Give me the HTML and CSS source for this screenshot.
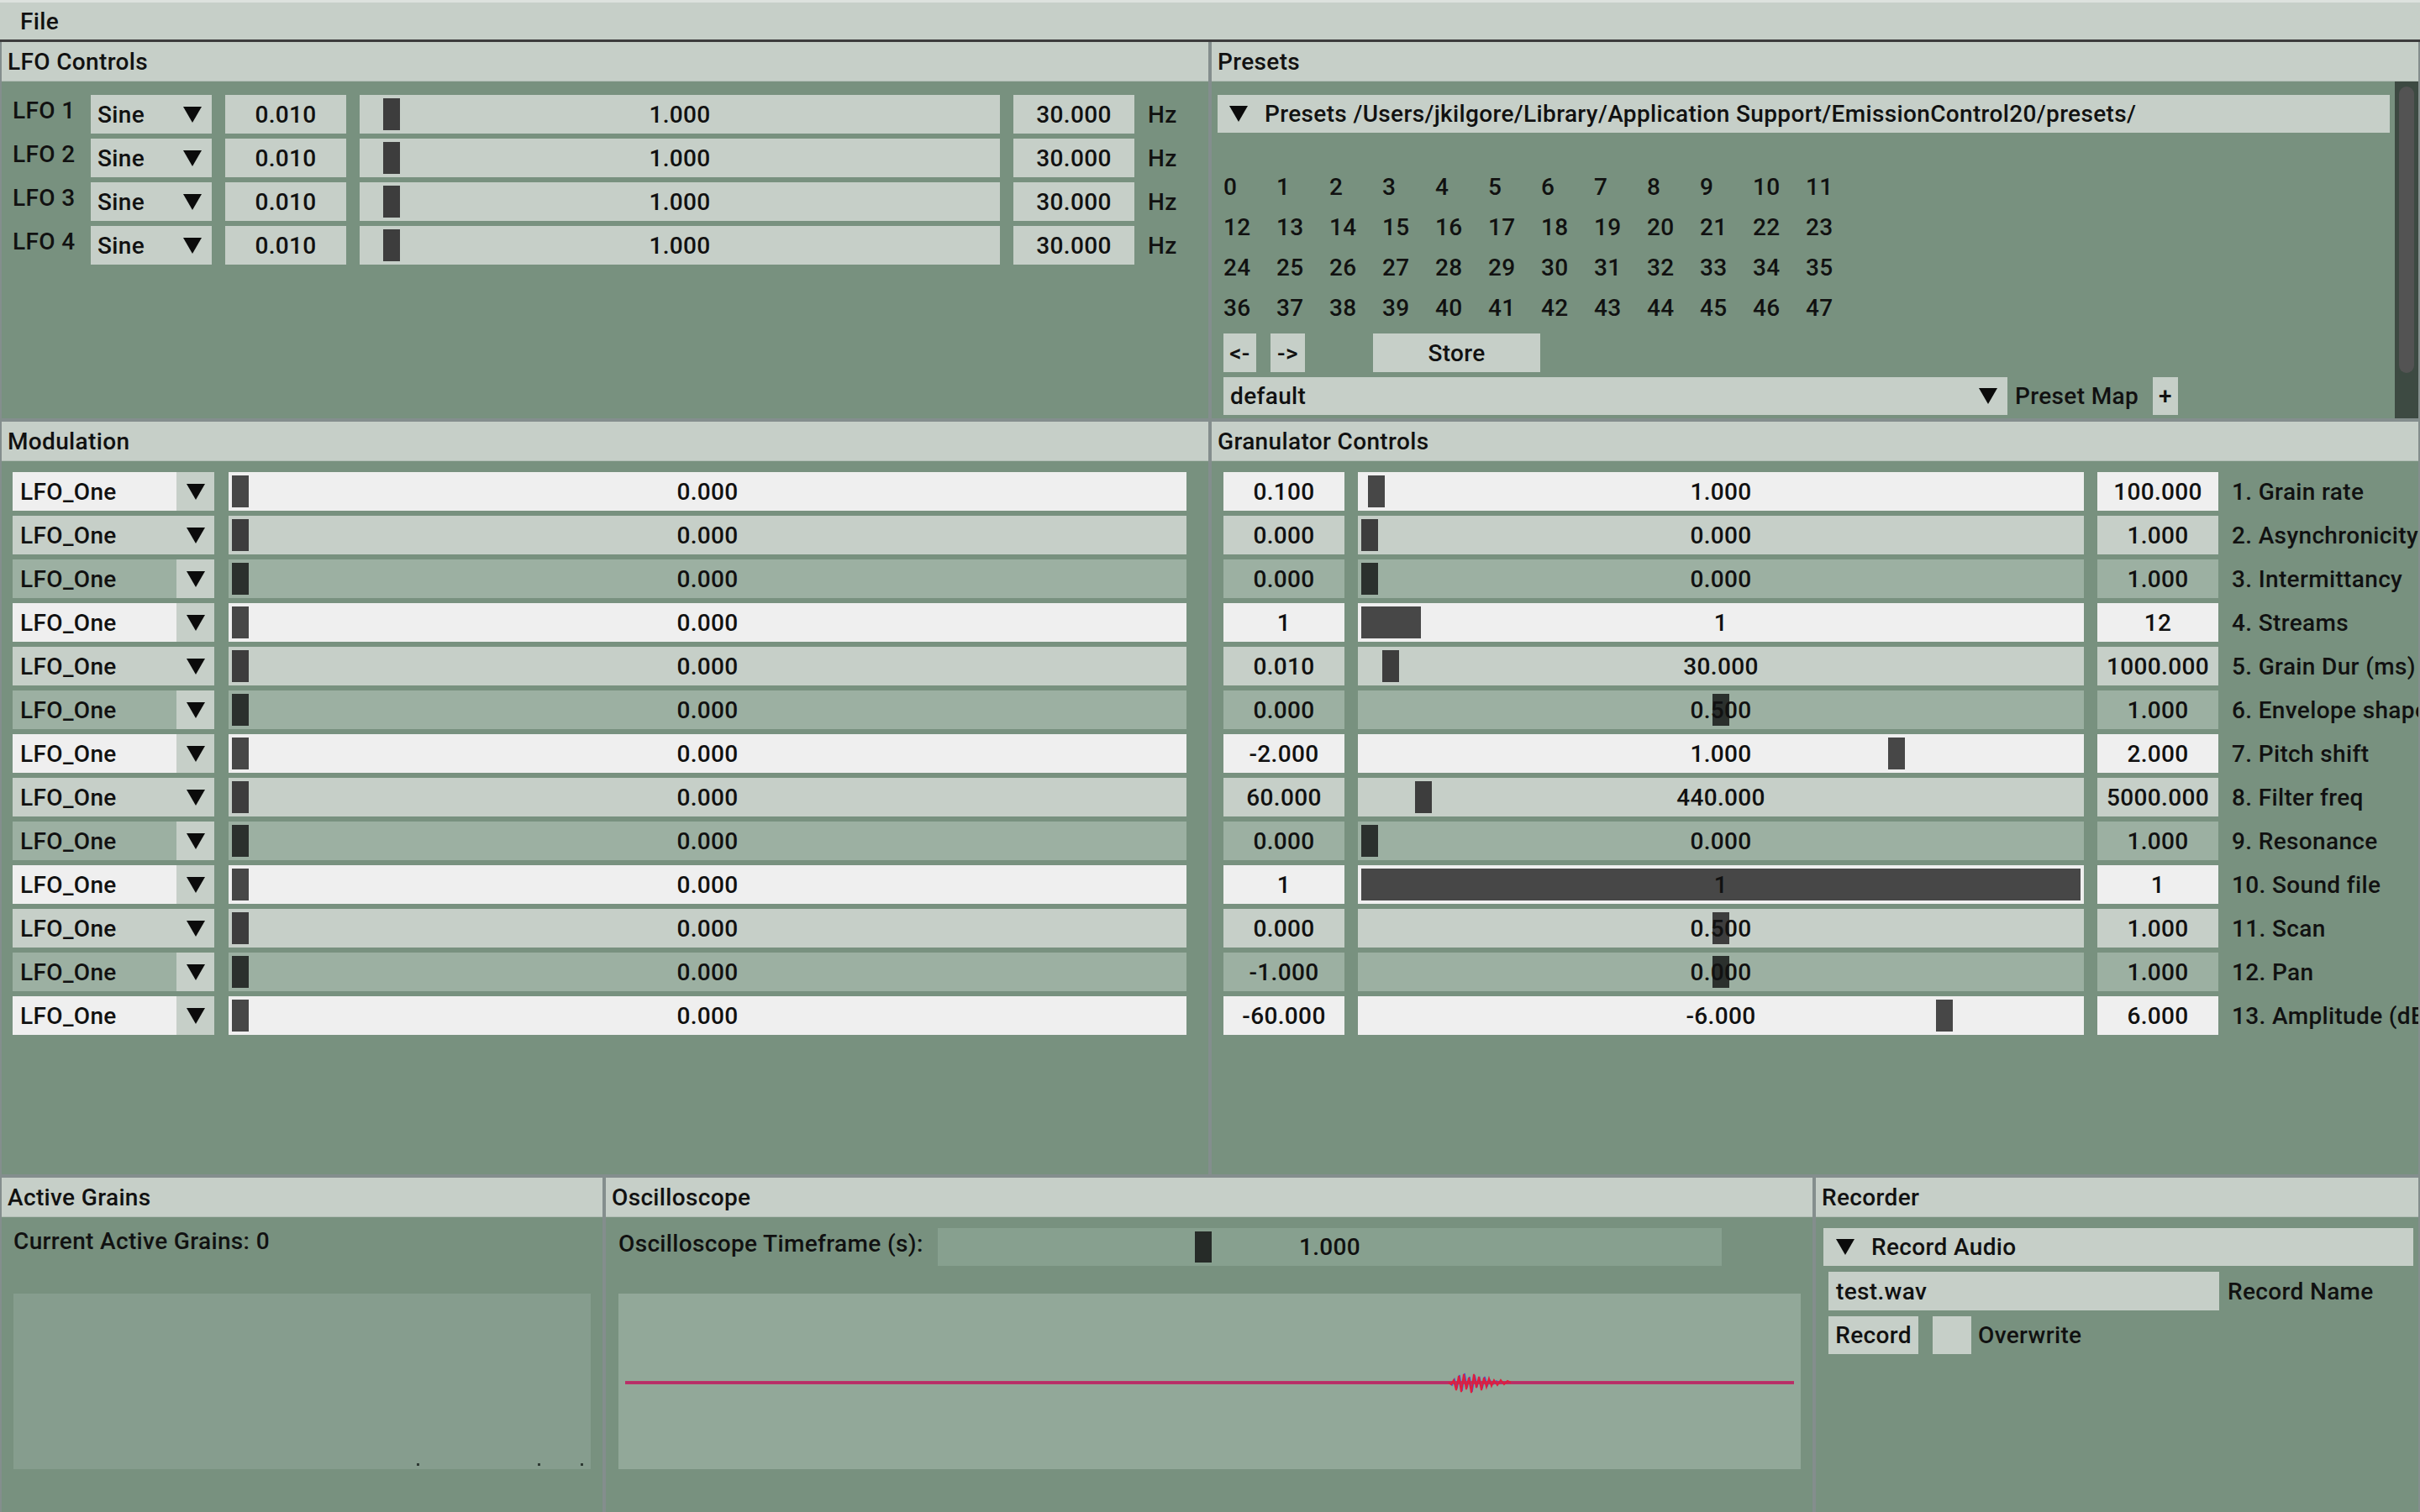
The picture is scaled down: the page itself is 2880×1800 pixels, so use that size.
FILE: index.html
```html
<!DOCTYPE html>
<html>
<head>
<meta charset="utf-8">
<title>EmissionControl2</title>
<link rel="stylesheet" href="styles.css">
</head>
<body>
<div class="menubar"><span class="menu-item">File</span></div>
<main class="layout">

  <section class="panel">
    <header class="panel-header">LFO Controls</header>
    <div class="lfo-body">
      <div class="lfo-row l">
        <span class="lfo-label">LFO 1</span>
        <div class="fld combo lfo-combo"><span class="ctext">Sine</span><i class="tri"></i></div>
        <div class="fld num">0.010</div>
        <div class="fld slider lfo-slider"><i class="grab" style="left:28px"></i><span class="sval">1.000</span></div>
        <div class="fld num">30.000</div>
        <span class="unit">Hz</span>
      </div>
      <div class="lfo-row l">
        <span class="lfo-label">LFO 2</span>
        <div class="fld combo lfo-combo"><span class="ctext">Sine</span><i class="tri"></i></div>
        <div class="fld num">0.010</div>
        <div class="fld slider lfo-slider"><i class="grab" style="left:28px"></i><span class="sval">1.000</span></div>
        <div class="fld num">30.000</div>
        <span class="unit">Hz</span>
      </div>
      <div class="lfo-row l">
        <span class="lfo-label">LFO 3</span>
        <div class="fld combo lfo-combo"><span class="ctext">Sine</span><i class="tri"></i></div>
        <div class="fld num">0.010</div>
        <div class="fld slider lfo-slider"><i class="grab" style="left:28px"></i><span class="sval">1.000</span></div>
        <div class="fld num">30.000</div>
        <span class="unit">Hz</span>
      </div>
      <div class="lfo-row l">
        <span class="lfo-label">LFO 4</span>
        <div class="fld combo lfo-combo"><span class="ctext">Sine</span><i class="tri"></i></div>
        <div class="fld num">0.010</div>
        <div class="fld slider lfo-slider"><i class="grab" style="left:28px"></i><span class="sval">1.000</span></div>
        <div class="fld num">30.000</div>
        <span class="unit">Hz</span>
      </div>
    </div>
  </section>

  <section class="panel">
    <header class="panel-header">Presets</header>
    <div class="presets-body">
      <div class="presets-content">
        <div class="collapse-bar presets-bar"><i class="tri"></i><span>Presets /Users/jkilgore/Library/Application Support/EmissionControl20/presets/</span></div>
        <div class="preset-grid">
          <span>0</span><span>1</span><span>2</span><span>3</span><span>4</span><span>5</span><span>6</span><span>7</span><span>8</span><span>9</span><span>10</span><span>11</span>
          <span>12</span><span>13</span><span>14</span><span>15</span><span>16</span><span>17</span><span>18</span><span>19</span><span>20</span><span>21</span><span>22</span><span>23</span>
          <span>24</span><span>25</span><span>26</span><span>27</span><span>28</span><span>29</span><span>30</span><span>31</span><span>32</span><span>33</span><span>34</span><span>35</span>
          <span>36</span><span>37</span><span>38</span><span>39</span><span>40</span><span>41</span><span>42</span><span>43</span><span>44</span><span>45</span><span>46</span><span>47</span>
        </div>
        <div class="preset-buttons">
          <button class="btn btn-prev">&lt;-</button>
          <button class="btn btn-next">-&gt;</button>
          <button class="btn btn-store">Store</button>
        </div>
        <div class="preset-map-row">
          <div class="fld combo map-combo"><span class="ctext">default</span><i class="tri"></i></div>
          <span class="map-label">Preset Map</span>
          <button class="btn btn-plus">+</button>
        </div>
      </div>
      <div class="scrollbar"><div class="thumb"></div></div>
    </div>
  </section>

  <section class="panel">
    <header class="panel-header">Modulation</header>
    <div class="mod-body">
      <div class="mod-row w"><div class="fld mcombo"><span class="ctext">LFO_One</span><span class="carrow"><i class="tri"></i></span></div><div class="fld slider mslider"><i class="grab" style="left:4px"></i><span class="sval">0.000</span></div></div>
      <div class="mod-row l"><div class="fld mcombo"><span class="ctext">LFO_One</span><span class="carrow"><i class="tri"></i></span></div><div class="fld slider mslider"><i class="grab" style="left:4px"></i><span class="sval">0.000</span></div></div>
      <div class="mod-row m"><div class="fld mcombo"><span class="ctext">LFO_One</span><span class="carrow"><i class="tri"></i></span></div><div class="fld slider mslider"><i class="grab" style="left:4px"></i><span class="sval">0.000</span></div></div>
      <div class="mod-row w"><div class="fld mcombo"><span class="ctext">LFO_One</span><span class="carrow"><i class="tri"></i></span></div><div class="fld slider mslider"><i class="grab" style="left:4px"></i><span class="sval">0.000</span></div></div>
      <div class="mod-row l"><div class="fld mcombo"><span class="ctext">LFO_One</span><span class="carrow"><i class="tri"></i></span></div><div class="fld slider mslider"><i class="grab" style="left:4px"></i><span class="sval">0.000</span></div></div>
      <div class="mod-row m"><div class="fld mcombo"><span class="ctext">LFO_One</span><span class="carrow"><i class="tri"></i></span></div><div class="fld slider mslider"><i class="grab" style="left:4px"></i><span class="sval">0.000</span></div></div>
      <div class="mod-row w"><div class="fld mcombo"><span class="ctext">LFO_One</span><span class="carrow"><i class="tri"></i></span></div><div class="fld slider mslider"><i class="grab" style="left:4px"></i><span class="sval">0.000</span></div></div>
      <div class="mod-row l"><div class="fld mcombo"><span class="ctext">LFO_One</span><span class="carrow"><i class="tri"></i></span></div><div class="fld slider mslider"><i class="grab" style="left:4px"></i><span class="sval">0.000</span></div></div>
      <div class="mod-row m"><div class="fld mcombo"><span class="ctext">LFO_One</span><span class="carrow"><i class="tri"></i></span></div><div class="fld slider mslider"><i class="grab" style="left:4px"></i><span class="sval">0.000</span></div></div>
      <div class="mod-row w"><div class="fld mcombo"><span class="ctext">LFO_One</span><span class="carrow"><i class="tri"></i></span></div><div class="fld slider mslider"><i class="grab" style="left:4px"></i><span class="sval">0.000</span></div></div>
      <div class="mod-row l"><div class="fld mcombo"><span class="ctext">LFO_One</span><span class="carrow"><i class="tri"></i></span></div><div class="fld slider mslider"><i class="grab" style="left:4px"></i><span class="sval">0.000</span></div></div>
      <div class="mod-row m"><div class="fld mcombo"><span class="ctext">LFO_One</span><span class="carrow"><i class="tri"></i></span></div><div class="fld slider mslider"><i class="grab" style="left:4px"></i><span class="sval">0.000</span></div></div>
      <div class="mod-row w"><div class="fld mcombo"><span class="ctext">LFO_One</span><span class="carrow"><i class="tri"></i></span></div><div class="fld slider mslider"><i class="grab" style="left:4px"></i><span class="sval">0.000</span></div></div>
    </div>
  </section>

  <section class="panel">
    <header class="panel-header">Granulator Controls</header>
    <div class="gran-body">
      <div class="gran-row w"><div class="fld num">0.100</div><div class="fld slider gslider"><i class="grab" style="left:12px"></i><span class="sval">1.000</span></div><div class="fld num">100.000</div><span class="glabel">1. Grain rate</span></div>
      <div class="gran-row l"><div class="fld num">0.000</div><div class="fld slider gslider"><i class="grab" style="left:4px"></i><span class="sval">0.000</span></div><div class="fld num">1.000</div><span class="glabel">2. Asynchronicity</span></div>
      <div class="gran-row m"><div class="fld num">0.000</div><div class="fld slider gslider"><i class="grab" style="left:4px"></i><span class="sval">0.000</span></div><div class="fld num">1.000</div><span class="glabel">3. Intermittancy</span></div>
      <div class="gran-row w"><div class="fld num">1</div><div class="fld slider gslider"><i class="grab" style="left:4px;width:71px"></i><span class="sval">1</span></div><div class="fld num">12</div><span class="glabel">4. Streams</span></div>
      <div class="gran-row l"><div class="fld num">0.010</div><div class="fld slider gslider"><i class="grab" style="left:29px"></i><span class="sval">30.000</span></div><div class="fld num">1000.000</div><span class="glabel">5. Grain Dur (ms)</span></div>
      <div class="gran-row m"><div class="fld num">0.000</div><div class="fld slider gslider"><i class="grab" style="left:422px"></i><span class="sval">0.500</span></div><div class="fld num">1.000</div><span class="glabel">6. Envelope shape</span></div>
      <div class="gran-row w"><div class="fld num">-2.000</div><div class="fld slider gslider"><i class="grab" style="left:631px"></i><span class="sval">1.000</span></div><div class="fld num">2.000</div><span class="glabel">7. Pitch shift</span></div>
      <div class="gran-row l"><div class="fld num">60.000</div><div class="fld slider gslider"><i class="grab" style="left:68px"></i><span class="sval">440.000</span></div><div class="fld num">5000.000</div><span class="glabel">8. Filter freq</span></div>
      <div class="gran-row m"><div class="fld num">0.000</div><div class="fld slider gslider"><i class="grab" style="left:4px"></i><span class="sval">0.000</span></div><div class="fld num">1.000</div><span class="glabel">9. Resonance</span></div>
      <div class="gran-row w"><div class="fld num">1</div><div class="fld slider gslider"><i class="grab" style="left:4px;width:856px"></i><span class="sval">1</span></div><div class="fld num">1</div><span class="glabel">10. Sound file</span></div>
      <div class="gran-row l"><div class="fld num">0.000</div><div class="fld slider gslider"><i class="grab" style="left:422px"></i><span class="sval">0.500</span></div><div class="fld num">1.000</div><span class="glabel">11. Scan</span></div>
      <div class="gran-row m"><div class="fld num">-1.000</div><div class="fld slider gslider"><i class="grab" style="left:422px"></i><span class="sval">0.000</span></div><div class="fld num">1.000</div><span class="glabel">12. Pan</span></div>
      <div class="gran-row w"><div class="fld num">-60.000</div><div class="fld slider gslider"><i class="grab" style="left:688px"></i><span class="sval">-6.000</span></div><div class="fld num">6.000</div><span class="glabel">13. Amplitude (dB)</span></div>
    </div>
  </section>

  <div class="bottom">
    <section class="panel grains-panel">
      <header class="panel-header">Active Grains</header>
      <div class="grains-body">
        <div class="grains-text">Current Active Grains: 0</div>
        <div class="grains-plot">
          <i class="speck" style="left:480px"></i>
          <i class="speck" style="left:624px"></i>
          <i class="speck" style="left:675px"></i>
        </div>
      </div>
    </section>
    <section class="panel scope-panel">
      <header class="panel-header">Oscilloscope</header>
      <div class="scope-body">
        <div class="scope-row">
          <span class="scope-label">Oscilloscope Timeframe (s):</span>
          <div class="scope-slider"><i class="grab scope-grab" style="left:306px"></i><span class="sval">1.000</span></div>
        </div>
        <div class="scope-plot">
          <svg class="wave" width="1407" height="209" viewBox="0 0 1407 209">
            <line x1="8" y1="106" x2="1399" y2="106" stroke="#3b4ec4" stroke-width="2"/>
            <polyline fill="none" stroke="#4050d8" stroke-width="1.5" points="988,106 992,109 995,102 998,113 1001,97 1004,116 1007,95 1010,112 1013,99 1016,117 1019,97 1022,110 1025,101 1028,113 1031,99 1034,110 1037,103 1041,108 1045,104 1049,107 1055,106"/>
            <line x1="8" y1="106" x2="1399" y2="106" stroke="#c02c62" stroke-width="4" opacity="0.92"/>
            <polyline fill="none" stroke="#e01e3c" stroke-width="2" points="988,106 991,108 994,103 997,115 1000,98 1003,117 1006,96 1009,114 1012,100 1015,118 1018,96 1021,112 1024,99 1027,115 1030,100 1033,111 1036,101 1039,110 1042,103 1046,109 1050,103 1054,108 1058,104 1062,106"/>
          </svg>
        </div>
      </div>
    </section>
    <section class="panel recorder-panel">
      <header class="panel-header">Recorder</header>
      <div class="recorder-body">
        <div class="collapse-bar record-bar"><i class="tri"></i><span>Record Audio</span></div>
        <div class="rec-row">
          <div class="fld rec-input">test.wav</div>
          <span class="rec-label">Record Name</span>
        </div>
        <div class="rec-row">
          <button class="btn rec-btn">Record</button>
          <span class="checkbox"></span>
          <span class="rec-check-label">Overwrite</span>
        </div>
      </div>
    </section>
  </div>

</main>
</body>
</html>
```

FILE: styles.css
```css
* { box-sizing: border-box; }
html, body { margin: 0; padding: 0; }
body {
  width: 2880px;
  height: 1800px;
  overflow: hidden;
  background: #78917f;
  font-family: Roboto, "Noto Sans", "Liberation Sans", sans-serif;
  font-weight: 500;
  font-size: 28px;
  letter-spacing: 0.35px;
  color: #111;
}

/* menu bar */
.menubar {
  height: 50px;
  background: #c6cfc8;
  border-top: 3px solid #dde2de;
  border-bottom: 3px solid #3c3c3c;
  display: flex;
  align-items: center;
  padding-left: 24px;
}

/* layout grid */
.layout {
  display: grid;
  grid-template-columns: 1436px 1436px;
  grid-template-rows: 448px 896px 398px;
  gap: 4px;
  padding: 0 2px;
  height: 1750px;
  background: #848e8d;
}
.bottom {
  grid-column: 1 / -1;
  display: flex;
  gap: 4px;
}
.panel {
  background: #78917f;
  display: flex;
  flex-direction: column;
  overflow: hidden;
  min-height: 0;
}
.panel-header {
  height: 47px;
  flex: none;
  background: #c6cfc8;
  display: flex;
  align-items: center;
  padding-left: 7px;
  border-bottom: 1px solid #b4bfb7;
  white-space: nowrap;
}

/* generic widgets */
.fld {
  height: 46px;
  background: var(--fld, #c6cfc8);
  display: flex;
  align-items: center;
  justify-content: center;
  flex: none;
  white-space: nowrap;
}
.w { --fld: #efefef; --grab: #474747; }
.l { --fld: #c6cfc8; --grab: #3d3d3d; }
.m { --fld: #9cb0a2; --grab: #2b302d; }

.num { width: 144px; }
.slider { position: relative; }
.grab {
  position: absolute;
  top: 4px;
  bottom: 4px;
  width: 20px;
  background: var(--grab, #3d3d3d);
}
.sval { position: relative; }
.tri {
  display: inline-block;
  width: 0;
  height: 0;
  border-left: 11px solid transparent;
  border-right: 11px solid transparent;
  border-top: 19px solid #0b0b0b;
  flex: none;
}
.combo { justify-content: space-between; padding: 0 12px 0 8px; }
.btn {
  font: inherit;
  letter-spacing: inherit;
  color: inherit;
  background: #c6cfc8;
  border: 0;
  padding: 0;
  height: 46px;
  display: flex;
  align-items: center;
  justify-content: center;
}

/* LFO */
.lfo-body {
  padding: 16px 0 0 13px;
  display: flex;
  flex-direction: column;
  gap: 6px;
}
.lfo-row {
  display: flex;
  align-items: center;
  gap: 16px;
}
.lfo-label {
  width: 77px;
  flex: none;
  padding-bottom: 10px;
  white-space: nowrap;
}
.lfo-combo { width: 144px; }
.lfo-slider { width: 762px; }
.unit { flex: none; }

/* Presets */
.presets-body {
  flex: 1;
  display: flex;
  min-height: 0;
}
.presets-content {
  flex: 1;
  padding: 16px 0 0 7px;
  display: flex;
  flex-direction: column;
}
.collapse-bar {
  height: 45px;
  background: #c6cfc8;
  display: flex;
  align-items: center;
  white-space: nowrap;
}
.presets-bar {
  width: 1395px;
  padding-left: 14px;
  gap: 20px;
}
.preset-grid {
  margin: 40px 0 0 7px;
  display: grid;
  grid-template-columns: repeat(12, 63px);
  grid-auto-rows: 48px;
  align-items: center;
}
.preset-buttons {
  margin: 7px 0 0 7px;
  display: flex;
}
.btn-prev { width: 39px; }
.btn-next { width: 41px; margin-left: 17px; }
.btn-store { width: 199px; margin-left: 81px; }
.preset-map-row {
  margin: 6px 0 0 7px;
  display: flex;
  align-items: center;
}
.map-combo { width: 933px; height: 45px; }
.map-label { margin-left: 9px; white-space: nowrap; }
.btn-plus { width: 30px; height: 45px; margin-left: 17px; }
.scrollbar {
  width: 28px;
  flex: none;
  background: #3d4a42;
  padding: 6px 5px;
}
.thumb {
  height: 341px;
  background: #535353;
  border-radius: 9px;
}

/* Modulation */
.mod-body {
  padding: 13px 0 0 13px;
  display: flex;
  flex-direction: column;
  gap: 6px;
}
.mod-row {
  display: flex;
  gap: 17px;
}
.mcombo {
  width: 240px;
  justify-content: space-between;
  padding-left: 9px;
}
.carrow {
  width: 45px;
  height: 100%;
  background: #c6cfc8;
  display: flex;
  align-items: center;
  justify-content: center;
}
.mslider { width: 1140px; }

/* Granulator */
.gran-body {
  padding: 13px 0 0 14px;
  display: flex;
  flex-direction: column;
  gap: 6px;
}
.gran-row {
  display: flex;
  align-items: center;
  gap: 16px;
}
.gslider { width: 864px; }
.glabel { white-space: nowrap; flex: none; }

/* Bottom: Active Grains */
.grains-panel { width: 715px; flex: none; }
.grains-body { padding: 13px 0 0 14px; }
.grains-text { height: 32px; line-height: 32px; white-space: nowrap; }
.grains-plot {
  position: relative;
  margin-top: 46px;
  width: 687px;
  height: 209px;
  background: #869d8e;
}
.speck {
  position: absolute;
  top: 202px;
  width: 3px;
  height: 3px;
  background: #2e3a33;
}

/* Oscilloscope */
.scope-panel { width: 1436px; flex: none; }
.scope-body { padding: 13px 0 0 15px; }
.scope-row { display: flex; align-items: center; height: 45px; }
.scope-label { width: 380px; flex: none; padding-bottom: 8px; white-space: nowrap; }
.scope-slider {
  position: relative;
  width: 933px;
  height: 45px;
  background: #87a08f;
  display: flex;
  align-items: center;
  justify-content: center;
}
.scope-grab { background: #262b28; }
.scope-plot {
  margin-top: 33px;
  width: 1407px;
  height: 209px;
  background: #92a899;
}
.wave { display: block; }

/* Recorder */
.recorder-panel { width: 717px; flex: none; }
.recorder-body {
  padding: 13px 0 0 9px;
  display: flex;
  flex-direction: column;
  gap: 7px;
}
.record-bar {
  width: 702px;
  padding-left: 15px;
  gap: 20px;
}
.rec-row {
  display: flex;
  align-items: center;
  padding-left: 6px;
}
.rec-input {
  width: 465px;
  justify-content: flex-start;
  padding-left: 9px;
}
.rec-label { margin-left: 10px; white-space: nowrap; }
.rec-btn { width: 107px; height: 45px; }
.checkbox {
  width: 46px;
  height: 45px;
  margin-left: 17px;
  background: #c6cfc8;
}
.rec-check-label { margin-left: 8px; }
```
